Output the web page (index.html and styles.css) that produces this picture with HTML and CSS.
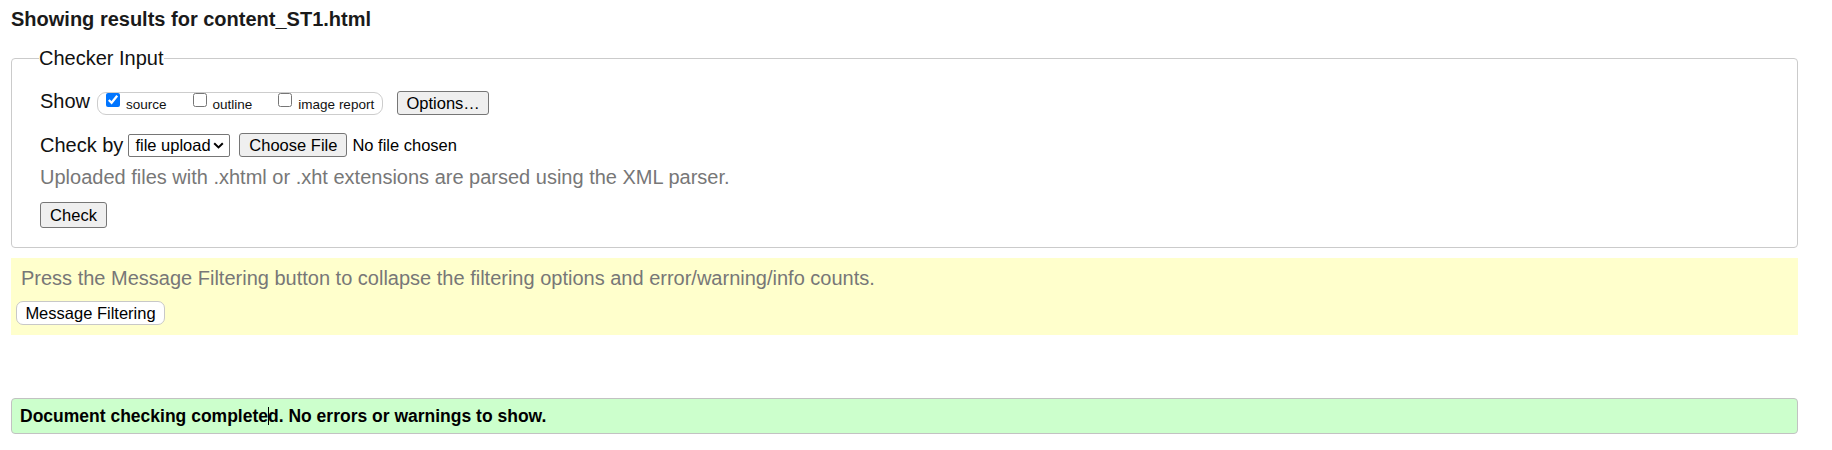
FILE: index.html
```html
<!DOCTYPE html>
<html lang="en">
<head>
<meta charset="utf-8">
<title>Showing results for content_ST1.html</title>
<link rel="stylesheet" href="styles.css">
</head>
<body>
<h2 class="title">Showing results for content_ST1.html</h2>
<fieldset class="checker">
  <legend class="legend">Checker Input</legend>
  <div class="row show-row">
    <span class="label">Show</span>
    <span class="group">
      <label class="opt"><input class="cb" type="checkbox" checked><span>source</span></label>
      <label class="opt"><input class="cb" type="checkbox"><span>outline</span></label>
      <label class="opt last"><input class="cb" type="checkbox"><span>image report</span></label>
    </span>
    <button class="btn options" type="button">Options…</button>
  </div>
  <div class="row check-row">
    <span class="label">Check by</span>
    <span class="select"><span class="sel-text">file upload</span><svg class="chev" width="11" height="7" viewBox="0 0 11 7"><path d="M1.2 1.2 L5.5 5.4 L9.8 1.2" fill="none" stroke="#000" stroke-width="2"/></svg></span>
    <button class="btn choose" type="button">Choose File</button>
    <span class="nofile">No file chosen</span>
  </div>
  <p class="hint upload-hint">Uploaded files with .xhtml or .xht extensions are parsed using the XML parser.</p>
  <button class="btn check" type="button">Check</button>
</fieldset>
<div class="filters">
  <p class="hint filter-hint">Press the Message Filtering button to collapse the filtering options and error/warning/info counts.</p>
  <button class="btn pill" type="button">Message Filtering</button>
</div>
<p class="success">Document checking complete<span class="caret">d</span>. No errors or warnings to show.</p>
</body>
</html>
```

FILE: styles.css
```css
html, body {
  background: #fff;
}
body {
  margin: 8px 34px 0 11px;
  font-family: "Liberation Sans", Arial, sans-serif;
  font-size: 20px;
  color: #000;
}
.title {
  margin: 0;
  font-size: 20px;
  line-height: 23px;
  font-weight: bold;
  color: #1a1a1a;
}
.checker {
  margin: 16px 0 0 0;
  padding: 21px 0 19px 28px;
  border: 1px solid #cbcbcb;
  border-radius: 4px;
  min-width: 0;
}
.legend {
  padding: 0;
  margin-left: -1px;
  font-size: 20px;
  line-height: 23px;
  color: #111;
}
.row {
  display: flex;
  align-items: center;
  height: 24px;
}
.label {
  font-size: 20px;
  line-height: 23px;
  color: #111;
  white-space: nowrap;
}
.show-row .label {
  margin-bottom: 3px;
}
.group {
  display: flex;
  align-items: stretch;
  box-sizing: border-box;
  height: 23px;
  margin-left: 7px;
  padding: 0 8px 0 8px;
  border: 1px solid #cdcdcd;
  border-radius: 9px;
}
.opt {
  display: flex;
  align-items: center;
  gap: 6px;
  margin-right: 26px;
  font-size: 13.5px;
  line-height: 15px;
  color: #111;
  white-space: nowrap;
}
.opt span {
  padding-top: 2px;
}
.opt.last {
  margin-right: 0;
}
.cb {
  align-self: flex-start;
  width: 14px;
  height: 14px;
  margin: 0;
  accent-color: #0075ff;
}
.btn {
  box-sizing: border-box;
  font-family: "Liberation Sans", Arial, sans-serif;
  font-size: 16.5px;
  line-height: 19px;
  color: #000;
  background: #efefef;
  border: 1px solid #767676;
  border-radius: 3px;
  padding: 0 8px;
  height: 24px;
  white-space: nowrap;
  flex: none;
}
.options {
  margin-left: 14px;
  min-width: 92px;
}
.check-row {
  margin-top: 18px;
}
.select {
  box-sizing: border-box;
  display: inline-flex;
  align-items: center;
  justify-content: space-between;
  width: 102px;
  height: 23px;
  margin-left: 5px;
  padding: 0 5px 0 6px;
  border: 1px solid #767676;
  border-radius: 2px;
  background: #fff;
  font-size: 16.5px;
  line-height: 19px;
  white-space: nowrap;
  flex: none;
}
.chev {
  display: block;
  margin-top: 1px;
}
.choose {
  margin-left: 9px;
  min-width: 108px;
}
.nofile {
  margin-left: 5px;
  font-size: 16.5px;
  line-height: 19px;
  white-space: nowrap;
}
.hint {
  font-size: 20px;
  line-height: 23px;
  color: #777;
}
.upload-hint {
  margin: 9px 0 13px 0;
}
.check {
  display: block;
  height: 26px;
  min-width: 67px;
}
.filters {
  margin-top: 10px;
  background: #ffffcc;
  padding: 9px 5px 10px 5px;
}
.filter-hint {
  margin: 0 0 11px 0;
  padding-left: 5px;
}
.pill {
  display: block;
  background: #fff;
  border: 1px solid #c8c8c8;
  border-radius: 7px;
  min-width: 149px;
  height: 24px;
}
.success {
  margin: 63px 0 0 0;
  padding: 7px 8px;
  background: #ccffcc;
  border: 1px solid #c2c2c2;
  border-radius: 4px;
  font-size: 17.5px;
  line-height: 20px;
  font-weight: bold;
  color: #000;
}
.caret {
  position: relative;
}
.caret::before {
  content: "";
  position: absolute;
  left: 0;
  top: 1px;
  width: 1px;
  height: 18px;
  background: #000;
}
```
